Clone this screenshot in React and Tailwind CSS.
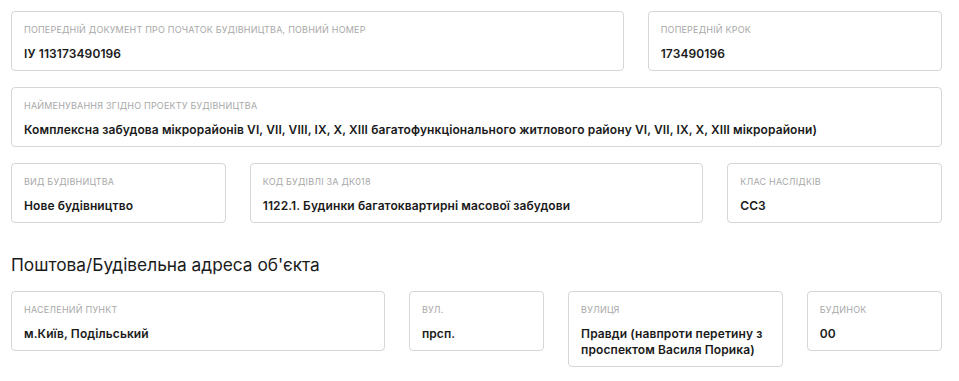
import React from 'react';

const Field = ({ label, value, span }) => (
  <div className={`${span} rounded border border-[#d6d6d6] bg-white px-3 pt-3 pb-2`}>
    <div className="text-[9px] leading-[12px] uppercase tracking-[0.2px] text-[#a8a8a8]">{label}</div>
    <div className="mt-[10px] text-[12px] leading-4 font-semibold tracking-[0.1px] text-[#1a1a1a]">{value}</div>
  </div>
);

export default function App() {
  return (
    <div className="min-h-screen bg-white font-['Inter',sans-serif]">
      <div className="w-[931px] ml-[11px] pt-[11px]">
        <div className="grid grid-cols-12 gap-x-6 gap-y-4 items-start">
          <Field
            span="col-span-8"
            label="Попередній документ про початок будівництва, повний номер"
            value="ІУ 113173490196"
          />
          <Field span="col-span-4" label="Попередній крок" value="173490196" />
          <Field
            span="col-span-12"
            label="Найменування згідно проекту будівництва"
            value="Комплексна забудова мікрорайонів VI, VII, VIII, IX, X, XIII багатофункціонального житлового району VI, VII, IX, X, XIII мікрорайони)"
          />
          <Field span="col-span-3" label="Вид будівництва" value="Нове будівництво" />
          <Field
            span="col-span-6"
            label="Код будівлі за ДК018"
            value="1122.1. Будинки багатоквартирні масової забудови"
          />
          <Field span="col-span-3" label="Клас наслідків" value="СС3" />
        </div>

        <h2 className="mt-[30px] mb-[14px] text-[17.3px] leading-6 font-normal text-[#1a1a1a]">
          Поштова/Будівельна адреса об'єкта
        </h2>

        <div className="grid grid-cols-12 gap-x-6 gap-y-4 items-start">
          <Field span="col-span-5" label="Населений пункт" value="м.Київ, Подільський" />
          <Field span="col-span-2" label="Вул." value="прсп." />
          <Field
            span="col-span-3"
            label="Вулиця"
            value="Правди (навпроти перетину з проспектом Василя Порика)"
          />
          <Field span="col-span-2" label="Будинок" value="00" />
        </div>
      </div>
    </div>
  );
}
